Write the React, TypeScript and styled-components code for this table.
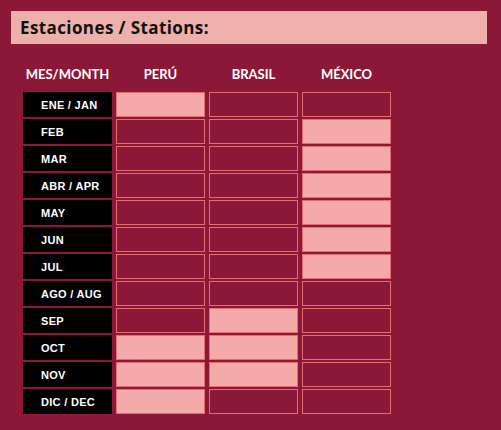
import React from "react";
import styled, { createGlobalStyle } from "styled-components";

const Global = createGlobalStyle`
  html, body { margin: 0; padding: 0; background: #8c1837; }
  body { width: 501px; height: 430px; overflow: hidden; }
`;

const Page = styled.div`
  padding: 11px 14px 0 11px;
  background: #8c1837;
  height: 430px;
  box-sizing: border-box;
`;

const TitleBar = styled.div`
  height: 33px;
  background: #edb0ab;
  display: flex;
  align-items: center;
  padding-left: 9px;
  font-family: "Open Sans", sans-serif;
  font-weight: 700;
  font-size: 17px;
  letter-spacing: 0.4px;
  color: #111;
`;

const Table = styled.div`
  margin: 22px 0 0 12px;
  display: grid;
  grid-template-columns: repeat(4, 89px);
  column-gap: 4px;
  row-gap: 2px;
`;

const HeaderRow = styled.div`
  display: contents;
`;

const HeadCell = styled.div`
  height: 17px;
  margin-bottom: 7px;
  text-align: center;
  color: #fff;
  font-family: "Lato", sans-serif;
  font-weight: 700;
  font-size: 13px;
  line-height: 17px;
  white-space: nowrap;
`;

const MonthCell = styled.div`
  height: 25px;
  background: #000;
  color: #fff;
  font-family: "Liberation Sans", Arial, sans-serif;
  font-weight: 700;
  font-size: 11px;
  letter-spacing: 0.3px;
  display: flex;
  align-items: center;
  padding-left: 18px;
  box-sizing: border-box;
`;

const Cell = styled.div<{ $on: boolean }>`
  height: 25px;
  box-sizing: border-box;
  border: 1px solid #e46d6e;
  background: ${(p) => (p.$on ? "#f4aaa9" : "transparent")};
`;

const months: [string, boolean, boolean, boolean][] = [
  ["ENE / JAN", true, false, false],
  ["FEB", false, false, true],
  ["MAR", false, false, true],
  ["ABR / APR", false, false, true],
  ["MAY", false, false, true],
  ["JUN", false, false, true],
  ["JUL", false, false, true],
  ["AGO / AUG", false, false, false],
  ["SEP", false, true, false],
  ["OCT", true, true, false],
  ["NOV", true, true, false],
  ["DIC / DEC", true, false, false],
];

export default function App() {
  return (
    <>
      <Global />
      <Page>
        <TitleBar>Estaciones / Stations:</TitleBar>
        <Table>
          <HeaderRow>
            <HeadCell>MES/MONTH</HeadCell>
            <HeadCell>PERÚ</HeadCell>
            <HeadCell>BRASIL</HeadCell>
            <HeadCell>MÉXICO</HeadCell>
          </HeaderRow>
          {months.map(([m, a, b, c]) => (
            <React.Fragment key={m}>
              <MonthCell>{m}</MonthCell>
              <Cell $on={a} />
              <Cell $on={b} />
              <Cell $on={c} />
            </React.Fragment>
          ))}
        </Table>
      </Page>
    </>
  );
}
